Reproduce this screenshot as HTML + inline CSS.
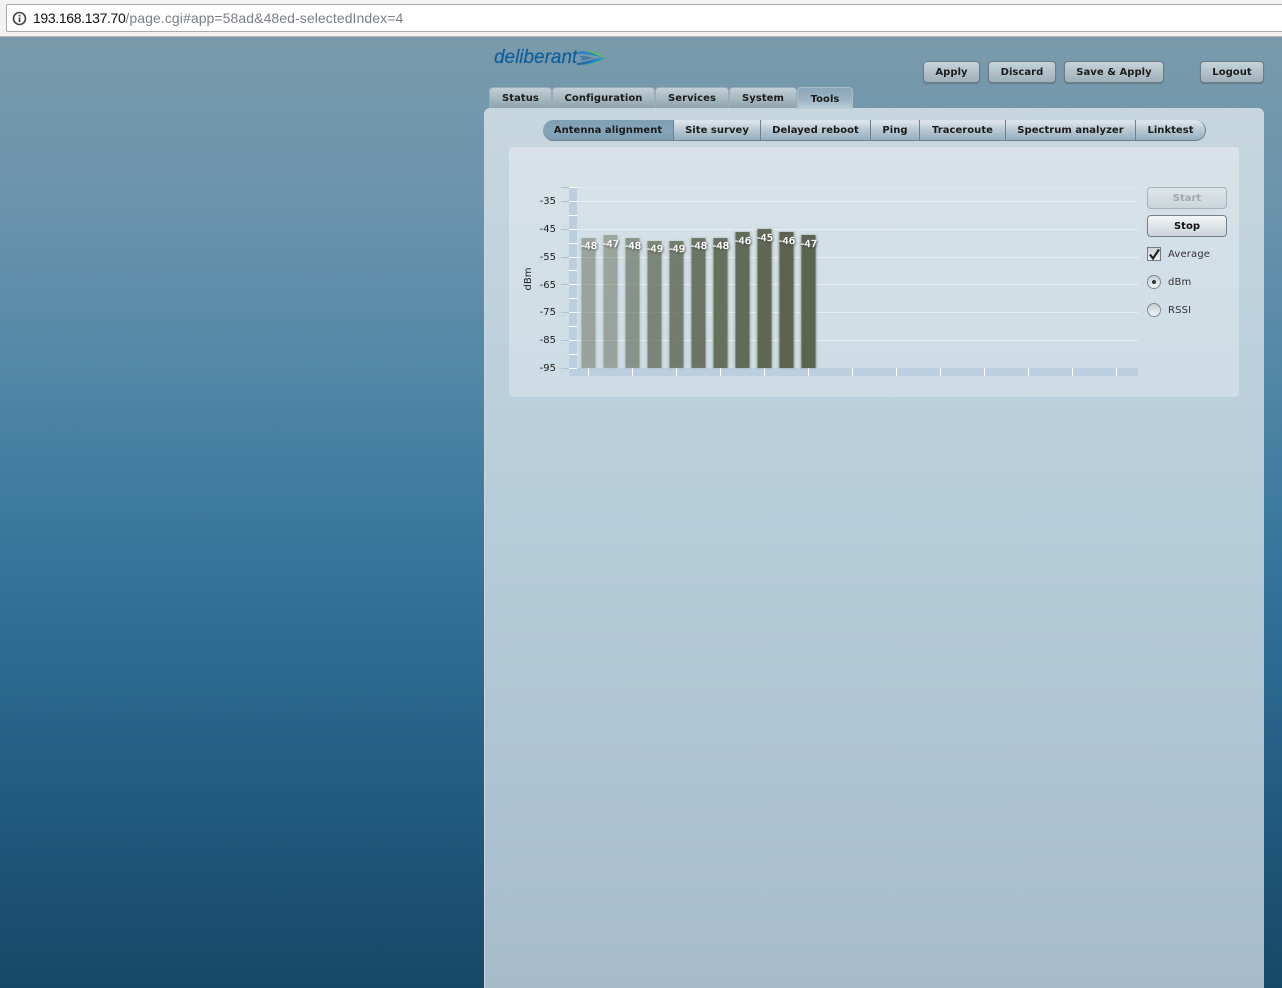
<!DOCTYPE html>
<html><head><meta charset="utf-8"><title>Antenna alignment</title>
<style>
html,body{margin:0;padding:0;width:1282px;height:988px;overflow:hidden}
body{position:relative;font-family:"DejaVu Sans","Liberation Sans",sans-serif;background:linear-gradient(#7a9aab 37px,#6b94ac 200px,#5589a8 350px,#3f7aa0 500px,#2f6c93 640px,#265f86 750px,#1e5478 860px,#164868 988px)}
.a{position:absolute;box-sizing:border-box;white-space:nowrap}
#bar{left:0;top:0;width:1282px;height:37px;background:#f2f2f2;border-bottom:1px solid #b8b8b8}
#url{left:6px;top:4px;width:1290px;height:28px;background:#fff;border:1px solid #aaa;border-radius:2px;font:14px/27px "Liberation Sans",sans-serif;color:#7a7f85;padding-left:26px;letter-spacing:.08px}
#url b{font-weight:normal;color:#111;letter-spacing:-.35px}
.btn{height:22px;top:61px;border:1px solid #6a7d88;border-radius:4px;background:linear-gradient(#c6d3da,#9fb0b9);font:bold 10px/21px "DejaVu Sans",sans-serif;color:#1c1c1c;text-align:center;box-shadow:0 1px 1px rgba(40,60,70,.3);letter-spacing:.04px}
.tab{top:87px;height:21px;border:1px solid #9aacb6;border-bottom:0;border-radius:4px 4px 0 0;background:linear-gradient(#c2cfd6,#8fa3ae);font:bold 10px/22px "DejaVu Sans",sans-serif;color:#1c1c1c;text-align:center;letter-spacing:.05px}
#panel{left:484px;top:108px;width:780px;height:900px;border-radius:6px 6px 0 0;border-left:1px solid #c9d6de;background:linear-gradient(#c7d6de,#b6cdda 400px,#a6bccb 880px)}
.sub{top:120px;height:21px;border-right:1px solid #6d818d;border-bottom:1px solid #6d818d;background:linear-gradient(#d9e3e9 10%,#bccbd5 45%,#96adbd);font:bold 10px/21px "DejaVu Sans",sans-serif;color:#1c1c1c;text-align:center;letter-spacing:.03px}
#inner{left:509px;top:147px;width:730px;height:250px;border-radius:4px;background:linear-gradient(#d8e2e8,#cddce5)}
.fb{left:1147px;width:80px;height:22px;border:1px solid #73808a;border-radius:4px;background:linear-gradient(#f3f5f6,#ccd5da);font:bold 10px/21px "DejaVu Sans",sans-serif;text-align:center;color:#111}
.lb{left:1168px;font:10px/12px "DejaVu Sans",sans-serif;color:#333;letter-spacing:.15px}
.r{left:1147px;width:14px;height:14px;border:1px solid #7d8a92;border-radius:50%;background:linear-gradient(#c6d0d6,#f1f4f5)}
svg text{font-family:"DejaVu Sans",sans-serif}
</style></head><body>
<div class="a" id="bar"></div>
<div class="a" id="url"><b>193.168.137.70</b>/page.cgi#app=58ad&amp;48ed-selectedIndex=4</div>
<svg class="a" style="left:12px;top:11px" width="15" height="15" viewBox="0 0 15 15"><circle cx="7.5" cy="7.5" r="6" fill="none" stroke="#444" stroke-width="1.6"/><rect x="6.7" y="6.5" width="1.7" height="4.5" fill="#444"/><rect x="6.7" y="3.8" width="1.7" height="1.7" fill="#444"/></svg>

<div class="a" style="left:494px;top:46px;font:italic 19px/23px 'Liberation Sans',sans-serif;color:#0f5e9c;letter-spacing:-.02px;-webkit-text-stroke:.2px #0f5e9c">deliberant</div>
<svg class="a" style="left:574px;top:44px" width="36" height="26" viewBox="0 0 36 26">
<path d="M5 7C14 7 25 10 31 14C23 12 14 10 4 10Z" fill="#2f86c4"/>
<path d="M11 6C19 7 27 10 31 14C25 12 19 9 11 6Z" fill="#5fc846"/>
<path d="M31 14C25 17 18 20 9 21C15 19 20 17 24 14Z" fill="#1f8fd0"/>
<path d="M31 14C26 18 20 21 12 22C19 20 25 17 31 14Z" fill="#5fc846" opacity=".7"/>
<path d="M3 19C11 18 19 16 23 14C19 18 11 21 3 21Z" fill="#1d6aa6"/>
<path d="M5 12C11 12 16 13 20 14C15 15 10 16 5 17C9 15 9 14 5 12Z" fill="#1d6aa6" opacity=".65"/>
</svg>

<div class="a btn" style="left:923px;width:57px">Apply</div>
<div class="a btn" style="left:988px;width:68px">Discard</div>
<div class="a btn" style="left:1064px;width:100px">Save &amp; Apply</div>
<div class="a btn" style="left:1200px;width:64px">Logout</div>

<div class="a" id="panel"></div>
<div class="a tab" style="left:489px;width:63px">Status</div>
<div class="a tab" style="left:552px;width:103px">Configuration</div>
<div class="a tab" style="left:655px;width:74px">Services</div>
<div class="a tab" style="left:729px;width:68px">System</div>
<div class="a tab" style="left:797px;width:56px;height:22px;line-height:23px;background:linear-gradient(#8ba6b9,#9db6c6 60%,#c0d0da);border-color:#a9bcc7">Tools</div>

<div class="a sub" style="left:543px;width:131px;border-radius:11px 0 0 11px;background:linear-gradient(#7f9fb5,#86a5ba 60%,#7b9ab0)">Antenna alignment</div>
<div class="a sub" style="left:674px;width:87px">Site survey</div>
<div class="a sub" style="left:761px;width:110px">Delayed reboot</div>
<div class="a sub" style="left:871px;width:49px">Ping</div>
<div class="a sub" style="left:920px;width:86px">Traceroute</div>
<div class="a sub" style="left:1006px;width:130px">Spectrum analyzer</div>
<div class="a sub" style="left:1136px;width:70px;border-radius:0 11px 11px 0">Linktest</div>

<div class="a" id="inner"></div>

<svg class="a" style="left:509px;top:147px" width="640" height="240" viewBox="509 147 640 240">
<defs>
<filter id="b" x="-30%" y="-5%" width="160%" height="110%"><feGaussianBlur stdDeviation="1"/></filter>
<filter id="t" x="-20%" y="-30%" width="140%" height="170%"><feDropShadow dx="1" dy="1" stdDeviation="1" flood-color="#222" flood-opacity=".7"/></filter>
</defs>
<rect x="569" y="187" width="8" height="189" fill="#bbcfe0"/>
<rect x="569" y="368" width="569" height="8" fill="#bbcfe0"/>
<g fill="#e8eff2">
<rect x="577" y="187" width="561" height="1" opacity=".55"/>
<rect x="577" y="201" width="561" height="1"/><rect x="577" y="229" width="561" height="1"/><rect x="577" y="257" width="561" height="1"/><rect x="577" y="284" width="561" height="1"/><rect x="577" y="312" width="561" height="1"/><rect x="577" y="340" width="561" height="1"/>
</g>
<g fill="#fff">
<rect x="569" y="187" width="8" height="1"/><rect x="569" y="201" width="8" height="1"/><rect x="569" y="215" width="8" height="1"/><rect x="569" y="229" width="8" height="1"/><rect x="569" y="243" width="8" height="1"/><rect x="569" y="257" width="8" height="1"/><rect x="569" y="270" width="8" height="1"/><rect x="569" y="284" width="8" height="1"/><rect x="569" y="298" width="8" height="1"/><rect x="569" y="312" width="8" height="1"/><rect x="569" y="326" width="8" height="1"/><rect x="569" y="340" width="8" height="1"/><rect x="569" y="354" width="8" height="1"/><rect x="569" y="368" width="8" height="1"/>
<rect x="588" y="368" width="1" height="8"/><rect x="632" y="368" width="1" height="8"/><rect x="676" y="368" width="1" height="8"/><rect x="720" y="368" width="1" height="8"/><rect x="764" y="368" width="1" height="8"/><rect x="808" y="368" width="1" height="8"/><rect x="852" y="368" width="1" height="8"/><rect x="896" y="368" width="1" height="8"/><rect x="940" y="368" width="1" height="8"/><rect x="984" y="368" width="1" height="8"/><rect x="1028" y="368" width="1" height="8"/><rect x="1072" y="368" width="1" height="8"/><rect x="1116" y="368" width="1" height="8"/>
</g>
<g fill="#aec3d3">
<rect x="561" y="187" width="8" height="1"/><rect x="561" y="201" width="8" height="1"/><rect x="561" y="229" width="8" height="1"/><rect x="561" y="257" width="8" height="1"/><rect x="561" y="284" width="8" height="1"/><rect x="561" y="312" width="8" height="1"/><rect x="561" y="340" width="8" height="1"/><rect x="561" y="368" width="8" height="1"/>
</g>
<g font-size="10" fill="#222" text-anchor="end">
<text x="556" y="204">-35</text><text x="556" y="232">-45</text><text x="556" y="260">-55</text><text x="556" y="288">-65</text><text x="556" y="315">-75</text><text x="556" y="343">-85</text><text x="556" y="371">-95</text>
</g>
<text transform="translate(531,279) rotate(-90)" font-size="10" fill="#222" text-anchor="middle">dBm</text>

<g filter="url(#b)" fill="#5b6450">
<rect x="580.5" y="238" width="16" height="130" opacity=".16"/><rect x="602.5" y="235" width="16" height="133" opacity=".16"/><rect x="624.5" y="238" width="16" height="130" opacity=".2"/><rect x="646.5" y="241" width="16" height="127" opacity=".24"/><rect x="668.5" y="241" width="16" height="127" opacity=".28"/><rect x="690.5" y="238" width="16" height="130" opacity=".32"/><rect x="712.5" y="238" width="16" height="130" opacity=".36"/><rect x="734.5" y="232" width="16" height="136" opacity=".4"/><rect x="756.5" y="229" width="16" height="139" opacity=".45"/><rect x="778.5" y="232" width="16" height="136" opacity=".5"/><rect x="800.5" y="235" width="16" height="133" opacity=".5"/>
</g>
<g fill="#5b6450">
<rect x="581.5" y="238" width="14" height="130" opacity=".38"/><rect x="603.5" y="235" width="14" height="133" opacity=".38"/><rect x="625.5" y="238" width="14" height="130" opacity=".52"/><rect x="647.5" y="241" width="14" height="127" opacity=".65"/><rect x="669.5" y="241" width="14" height="127" opacity=".72"/><rect x="691.5" y="238" width="14" height="130" opacity=".8"/><rect x="713.5" y="238" width="14" height="130" opacity=".85"/><rect x="735.5" y="232" width="14" height="136" opacity=".9"/><rect x="757.5" y="229" width="14" height="139" opacity=".95"/><rect x="779.5" y="232" width="14" height="136"/><rect x="801.5" y="235" width="14" height="133"/>
</g>
<g font-size="10" fill="#fff" stroke="#fff" stroke-width=".35" text-anchor="middle" filter="url(#t)">
<text x="589" y="249">-48</text><text x="611" y="247">-47</text><text x="633" y="249">-48</text><text x="655" y="252">-49</text><text x="677" y="252">-49</text><text x="699" y="249">-48</text><text x="721" y="249">-48</text><text x="743" y="244">-46</text><text x="765" y="241">-45</text><text x="787" y="244">-46</text><text x="809" y="247">-47</text>
</g>
</svg>

<div class="a fb" style="top:187px;color:#a3a9ad;background:linear-gradient(#dfe6ea,#c9d4da);border-color:#a6b2b9">Start</div>
<div class="a fb" style="top:215px">Stop</div>
<div class="a" style="left:1147px;top:247px;width:14px;height:14px;border:1px solid #6f7c85;background:linear-gradient(#c8d2d8,#eef2f4)"></div>
<svg class="a" style="left:1147px;top:247px" width="15" height="15" viewBox="0 0 15 15"><path d="M3 7.5L6 11.5L12 2.5" fill="none" stroke="#222" stroke-width="2.2"/></svg>
<div class="a lb" style="top:249px">Average</div>
<div class="a r" style="top:275px"></div>
<div class="a" style="left:1152px;top:280px;width:4px;height:4px;border-radius:50%;background:#333"></div>
<div class="a lb" style="top:277px">dBm</div>
<div class="a r" style="top:303px"></div>
<div class="a lb" style="top:305px">RSSI</div>
</body></html>
